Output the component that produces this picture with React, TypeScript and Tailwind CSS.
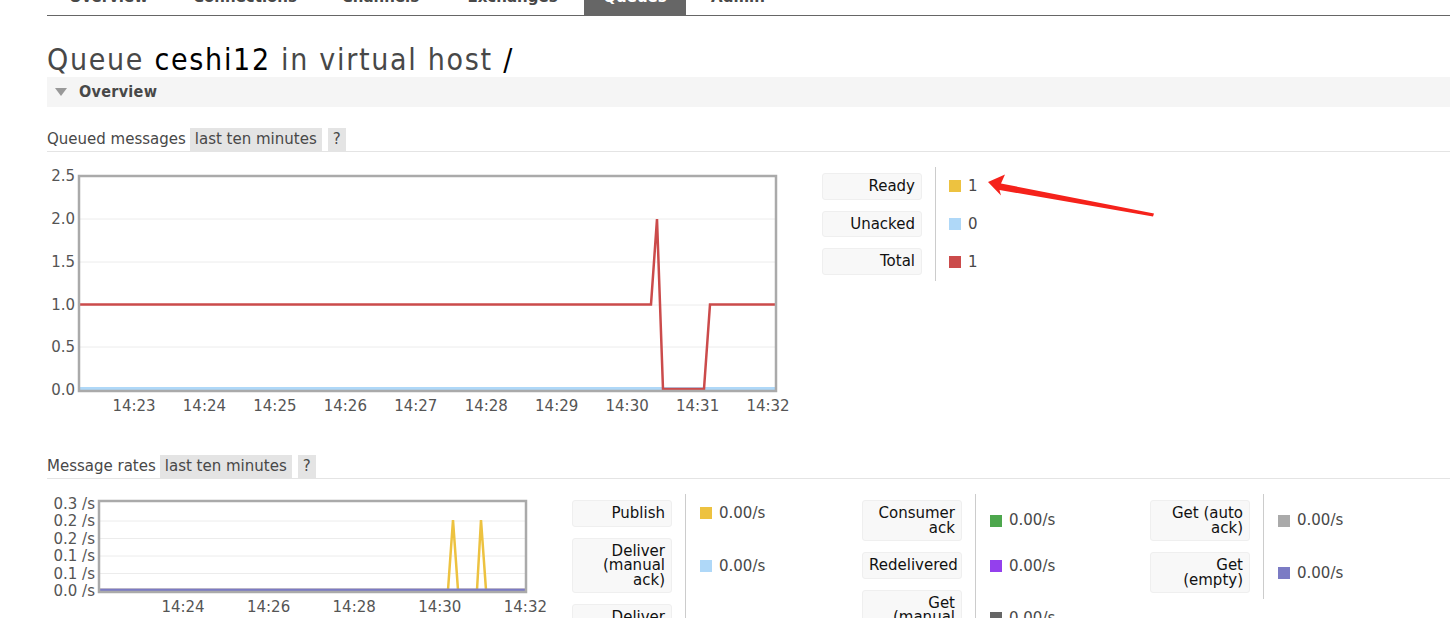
const tabs = [
  { name: "Overview", w: 123 },
  { name: "Connections", w: 150 },
  { name: "Channels", w: 121 },
  { name: "Exchanges", w: 143 },
  { name: "Queues", w: 102, active: true },
  { name: "Admin", w: 104 },
];

type Row = { label: string[]; color: string; value: string };

const queued: Row[] = [
  { label: ["Ready"], color: "bg-[#edc240]", value: "1" },
  { label: ["Unacked"], color: "bg-[#afd8f8]", value: "0" },
  { label: ["Total"], color: "bg-[#cb4b4b]", value: "1" },
];

const rates1: Row[] = [
  { label: ["Publish"], color: "bg-[#edc240]", value: "0.00/s" },
  { label: ["Deliver", "(manual", "ack)"], color: "bg-[#afd8f8]", value: "0.00/s" },
  { label: ["Deliver", "(auto ack)"], color: "bg-[#cb4b4b]", value: "0.00/s" },
];

const rates2: Row[] = [
  { label: ["Consumer", "ack"], color: "bg-[#4da74d]", value: "0.00/s" },
  { label: ["Redelivered"], color: "bg-[#9440ed]", value: "0.00/s" },
  { label: ["Get", "(manual", "ack)"], color: "bg-[#666666]", value: "0.00/s" },
];

const rates3: Row[] = [
  { label: ["Get (auto", "ack)"], color: "bg-[#aaaaaa]", value: "0.00/s" },
  { label: ["Get", "(empty)"], color: "bg-[#7b7bc4]", value: "0.00/s" },
];

function SectionHead({ title }: { title: string }) {
  return (
    <div className="flex items-end h-[24px] border-b border-[#e4e4e4] text-[15px] text-[#484848]">
      <span className="mr-[4px] leading-[23px]">{title}</span>
      <span className="h-[23px] px-[5px] bg-[#e4e4e4] flex items-center">last ten minutes</span>
      <span className="ml-[6px] h-[23px] w-[18px] bg-[#e4e4e4] flex items-center justify-center">?</span>
    </div>
  );
}

function Legend({ rows, valueW, gap = 14 }: { rows: Row[]; valueW: number; gap?: number }) {
  return (
    <div className="flex flex-col text-[15px]">
      {rows.map((r, i) => (
        <div key={r.label.join(" ")} className="flex">
          <div className={`w-[113px] shrink-0 ${i === 0 ? "pt-[6px]" : "pt-[5px]"} pb-[6px]`}>
            <div className="w-[100px] rounded-[3px] border border-[#efefef] bg-[#f8f8f8] px-[6px] py-[5px] text-right leading-[14.5px] text-[#111]">
              {r.label.map((l) => (
                <div key={l}>{l}</div>
              ))}
            </div>
          </div>
          <div
            className="flex items-center border-l border-[#cccccc] text-[#484848]"
            style={{ width: valueW, paddingLeft: gap }}
          >
            <span className={`w-[12px] h-[12px] ${r.color}`} />
            <span className="ml-[7px]">{r.value}</span>
          </div>
        </div>
      ))}
    </div>
  );
}

function QueuedChart() {
  const xs = ["14:23", "14:24", "14:25", "14:26", "14:27", "14:28", "14:29", "14:30", "14:31", "14:32"];
  const ys = [
    { t: "2.5", y: 9 },
    { t: "2.0", y: 52 },
    { t: "1.5", y: 95 },
    { t: "1.0", y: 138 },
    { t: "0.5", y: 180 },
    { t: "0.0", y: 223 },
  ];
  return (
    <svg width="760" height="253" className="shrink-0" fontFamily="DejaVu Sans, Verdana, sans-serif" fontSize="15">
      {ys.slice(1, 5).map((g) => (
        <line key={g.t} x1="32" x2="728" y1={g.y} y2={g.y} stroke="#ececec" strokeWidth="1" />
      ))}
      {ys.map((g) => (
        <text key={g.t} x="28" y={g.y + 5} textAnchor="end" fill="#555">
          {g.t}
        </text>
      ))}
      {xs.map((t, i) => (
        <text key={t} x={87 + 70.45 * i} y="244" textAnchor="middle" fill="#555">
          {t}
        </text>
      ))}
      <line x1="33" x2="728" y1="221.5" y2="221.5" stroke="#afd8f8" strokeWidth="3" />
      <polyline
        points="33,137.5 604,137.5 610,52 616,222 657,222 663,137.5 728,137.5"
        fill="none"
        stroke="#cb4b4b"
        strokeWidth="2.5"
        strokeLinejoin="miter"
      />
      <rect x="32" y="9" width="697" height="215" fill="none" stroke="#aaaaaa" strokeWidth="2.5" />
    </svg>
  );
}

function RatesChart() {
  const xs = ["14:24", "14:26", "14:28", "14:30", "14:32"];
  const ys = [
    { t: "0.3 /s", y: 10 },
    { t: "0.2 /s", y: 27 },
    { t: "0.2 /s", y: 44.5 },
    { t: "0.1 /s", y: 62 },
    { t: "0.1 /s", y: 79.5 },
    { t: "0.0 /s", y: 97 },
  ];
  return (
    <svg width="525" height="124" className="shrink-0" fontFamily="DejaVu Sans, Verdana, sans-serif" fontSize="15">
      {ys.slice(1, 5).map((g, i) => (
        <line key={i} x1="52" x2="479" y1={g.y} y2={g.y} stroke="#ececec" strokeWidth="1" />
      ))}
      {ys.map((g, i) => (
        <text key={i} x="48" y={g.y + 5} textAnchor="end" fill="#555">
          {g.t}
        </text>
      ))}
      {xs.map((t, i) => (
        <text key={t} x={136 + 85.6 * i} y="118" textAnchor="middle" fill="#555">
          {t}
        </text>
      ))}
      <polyline
        points="53,96 401,96 406,26 411,96 430,96 434,26 439,96 478,96"
        fill="none"
        stroke="#edc240"
        strokeWidth="2.5"
      />
      <line x1="53" x2="478" y1="96" y2="96" stroke="#7b7bc4" strokeWidth="3" />
      <rect x="52" y="7" width="427" height="91" fill="none" stroke="#aaaaaa" strokeWidth="2.5" />
    </svg>
  );
}

export default function App() {
  return (
    <div className="relative w-[1450px] h-[618px] overflow-hidden bg-white font-['DejaVu_Sans',Verdana,sans-serif] text-[#484848]">
      <div className="pl-[47px]">
        {/* top tabs, mostly scrolled out of view */}
        <div className="flex h-[16px] border-b border-[#666666] font-bold text-[15px]">
          {tabs.map((t) => (
            <div
              key={t.name}
              className={`h-[15px] overflow-hidden text-center ${t.active ? "bg-[#666666] text-white" : "text-[#484848]"}`}
              style={{ width: t.w }}
            >
              <span className="block leading-[18px] -mt-[12px]">{t.name}</span>
            </div>
          ))}
        </div>

        <h1 className="mt-[28px] text-[30px] leading-[32px] tracking-[1.7px] font-['DejaVu_Sans_Condensed','DejaVu_Sans',sans-serif] [font-stretch:condensed] text-[#484848]">
          Queue <span className="text-black">ceshi12</span> in virtual host <span className="text-black">/</span>
        </h1>

        <div className="mt-[1px] h-[30px] bg-[#f5f5f5] flex items-center pl-[8px]">
          <span className="w-0 h-0 border-l-[6px] border-r-[6px] border-t-[8px] border-l-transparent border-r-transparent border-t-[#999999]" />
          <span className="ml-[12px] font-bold text-[16px] tracking-[0.3px] text-[#484848] font-['DejaVu_Sans_Condensed','DejaVu_Sans',sans-serif] [font-stretch:condensed]">
            Overview
          </span>
        </div>

        <div className="mt-[21px]">
          <SectionHead title="Queued messages" />
          <div className="mt-[15px] flex">
            <QueuedChart />
            <div className="ml-[15px]">
              <Legend rows={queued} valueW={120} gap={13} />
            </div>
          </div>
        </div>

        <div className="mt-[35px]">
          <SectionHead title="Message rates" />
          <div className="mt-[15px] flex">
            <RatesChart />
            <Legend rows={rates1} valueW={177} />
            <Legend rows={rates2} valueW={175} />
            <Legend rows={rates3} valueW={175} />
          </div>
        </div>
      </div>

      {/* annotation arrow */}
      <svg className="absolute left-0 top-0 pointer-events-none" width="1450" height="618">
        <polygon
          points="988,182 1005,174.5 1001,183.5 1154,213.5 1153,216.5 999.5,190 1001,195.5"
          fill="#f5221b"
        />
      </svg>
    </div>
  );
}
